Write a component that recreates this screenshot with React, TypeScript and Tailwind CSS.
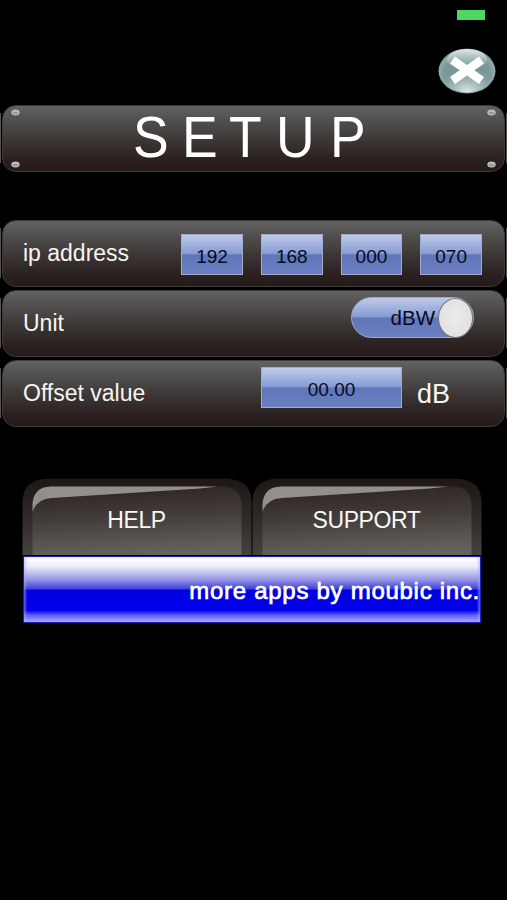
import type { ReactNode } from "react";

const FIELD =
  "flex h-[41px] items-center justify-center border border-[#a3aacb] bg-[linear-gradient(180deg,#bfcbea_0%,#879bd3_48%,#6076b9_51%,#6a7fc0_100%)] text-[19px] leading-none text-[#050a1c]";

function Rivet() {
  return (
    <svg width="9" height="7" viewBox="0 0 9 7">
      <ellipse cx="4.5" cy="3.5" rx="4.2" ry="3" fill="#bdbbb9" />
      <path d="M2 4h5" stroke="#7b7572" strokeWidth="1" />
    </svg>
  );
}

function Panel({ children, className }: { children: ReactNode; className: string }) {
  return (
    <div className="flex h-[67px] w-[507px] items-center bg-[linear-gradient(90deg,#56524f_0_1px,transparent_1px_506px,#56524f_506px)] bg-[length:507px_50px] bg-[position:0_8px] bg-no-repeat">
      <div
        className={
          "mx-[2px] flex h-[67px] w-[503px] rounded-[14px] border border-[#3d3a38] bg-[linear-gradient(180deg,#626262_0%,#4f4d4c_25%,#3a3533_55%,#291f1e_85%,#251b1a_100%)] " +
          className
        }
      >
        {children}
      </div>
    </div>
  );
}

function Tab({ label, id }: { label: string; id: string }) {
  return (
    <button className="grid h-[77px] w-[230px] place-items-center">
      <svg className="col-start-1 row-start-1" width="230" height="77" viewBox="0 0 230 77">
        <defs>
          <linearGradient id={id + "o"} x1="0" y1="0" x2="0" y2="1">
            <stop offset="0" stopColor="#1d1816" />
            <stop offset="0.4" stopColor="#2b2523" />
            <stop offset="1" stopColor="#45423e" />
          </linearGradient>
          <linearGradient id={id + "i"} x1="0.35" y1="0" x2="0.5" y2="1">
            <stop offset="0" stopColor="#2b2423" />
            <stop offset="0.45" stopColor="#433d3a" />
            <stop offset="1" stopColor="#66635e" />
          </linearGradient>
        </defs>
        <path d="M.5 77V24Q1 1 27 .5H203Q229 1 229.5 24V77Z" fill={`url(#${id}o)`} />
        <path d="M10.500 77V27Q11 9 29 8.500H201Q219 9 219.500 27V77Z" fill={`url(#${id}i)`} />
        <path d="M10.500 34V27Q11 9 29 8.500H196Q187 9.500 178 10.500L30 20Q14 21 10.500 34Z" fill="#948f8d" />
      </svg>
      <span className="z-10 col-start-1 row-start-1 pt-[8px] pr-[1px] text-[23px] leading-none tracking-[-0.4px] text-[#f8f8f8]">{label}</span>
    </button>
  );
}

export default function App() {
  return (
    <main className="flex h-[900px] w-[507px] flex-col overflow-hidden bg-black font-['Liberation_Sans',Arial,sans-serif] text-[#f7f5f4]">
      <div className="flex h-[48px] justify-end pt-[10px] pr-[22px]">
        <div className="h-[10px] w-[28px] bg-[#4bd964]" />
      </div>
      <header className="flex h-[57px] justify-end pr-[11px]">
        <button aria-label="Close" className="h-[46px] w-[58px]">
          <svg width="58" height="46" viewBox="0 0 58 46">
            <defs>
              <radialGradient id="glass" cx="0.5" cy="0.55" r="0.55">
                <stop offset="0" stopColor="#759397" />
                <stop offset="0.72" stopColor="#7b979a" />
                <stop offset="0.9" stopColor="#93aaab" />
                <stop offset="1" stopColor="#526c6c" />
              </radialGradient>
              <linearGradient id="shine" x1="0" y1="0" x2="0" y2="1">
                <stop offset="0" stopColor="#e1e9e8" />
                <stop offset="1" stopColor="#a4b8b9" stopOpacity="0.1" />
              </linearGradient>
              <radialGradient id="glow" cx="0.5" cy="1" r="0.55">
                <stop offset="0" stopColor="#e4eeeb" />
                <stop offset="1" stopColor="#b4c6c5" stopOpacity="0" />
              </radialGradient>
            </defs>
            <ellipse cx="29" cy="23" rx="28.500" ry="22.500" fill="url(#glass)" />
            <ellipse cx="29" cy="23" rx="27" ry="21.500" fill="url(#glow)" />
            <ellipse cx="29" cy="11.500" rx="20" ry="10.500" fill="url(#shine)" />
            <path d="M14.500 12L43.500 32.500M43.500 12L14.500 32.500" stroke="#fff" strokeWidth="8.500" />
          </svg>
        </button>
      </header>

      <Panel className="justify-between px-[8px] py-[3px]">
        <div className="flex flex-col justify-between">
          <Rivet />
          <Rivet />
        </div>
        <h1 className="flex text-[57.5px] leading-[57px] text-white">
          <span className="w-[49.5px] origin-left scale-x-[0.93]">S</span>
          <span className="w-[47px] origin-left scale-x-[0.93]">E</span>
          <span className="w-[47px] origin-left scale-x-[0.93]">T</span>
          <span className="w-[53.5px] origin-left scale-x-[0.93]">U</span>
          <span className="w-[45px] origin-left scale-x-[0.93]">P</span>
        </h1>
        <div className="flex flex-col justify-between">
          <Rivet />
          <Rivet />
        </div>
      </Panel>

      <section className="mt-[48px] flex flex-col gap-[3px]">
        <Panel className="justify-between pr-[22px] pl-[20px]">
          <label className="pt-[20px] text-[23px] leading-[24px]">ip address</label>
          <div className="flex gap-[18px] pt-[13px]">
            {["192", "168", "000", "070"].map((octet) => (
              <div key={octet} className={FIELD + " w-[61.7px] pt-[3px]"}>
                {octet}
              </div>
            ))}
          </div>
        </Panel>
        <Panel className="justify-between pr-[30px] pl-[20px]">
          <label className="pt-[20px] text-[23px] leading-[24px]">Unit</label>
          <div className="mt-[6px] flex h-[41px] w-[123px] items-center justify-end rounded-full border border-[#a3aacb] bg-[linear-gradient(180deg,#bfcbea_0%,#879bd3_48%,#6076b9_51%,#6a7fc0_100%)]">
            <span className="pt-[2px] pr-[3px] text-[20.5px] leading-none text-[#050a1c]">dBW</span>
            <div className="h-[40px] w-[35px] rounded-[50%] border border-[#777] bg-[radial-gradient(ellipse,#ececec_0%,#e2e2e2_65%,#fafafa_100%)]" />
          </div>
        </Panel>
        <Panel className="pl-[20px]">
          <label className="w-[238px] pt-[20px] text-[23px] leading-[24px]">Offset value</label>
          <div className={FIELD + " mt-[6px] w-[141px] pt-[4px]"}>00.00</div>
          <span className="pt-[19px] pl-[15px] text-[27px] leading-[28px]">dB</span>
        </Panel>
      </section>

      <nav className="mt-[51px] flex pl-[22px]">
        <Tab label="HELP" id="help" />
        <Tab label="SUPPORT" id="support" />
      </nav>
      <div className="mt-[1px] ml-[23px] flex h-[67px] w-[458px] items-center justify-end border border-[#2020b5] bg-[linear-gradient(180deg,#ffffff_0%,#eeeefb_14%,#9a9ae6_34%,#4040dc_49%,#0000df_51%,#0000ed_82%,#5a5aff_89%,#aaaaff_100%)] pt-[3px] shadow-[inset_2px_0_2px_rgba(170,170,255,0.5),inset_-2px_0_2px_rgba(170,170,255,0.5)]">
        <span className="text-[24px] leading-none tracking-[0.72px] whitespace-nowrap text-white [-webkit-text-stroke:0.7px_white]">
          more apps by moubic inc.
        </span>
      </div>
    </main>
  );
}
